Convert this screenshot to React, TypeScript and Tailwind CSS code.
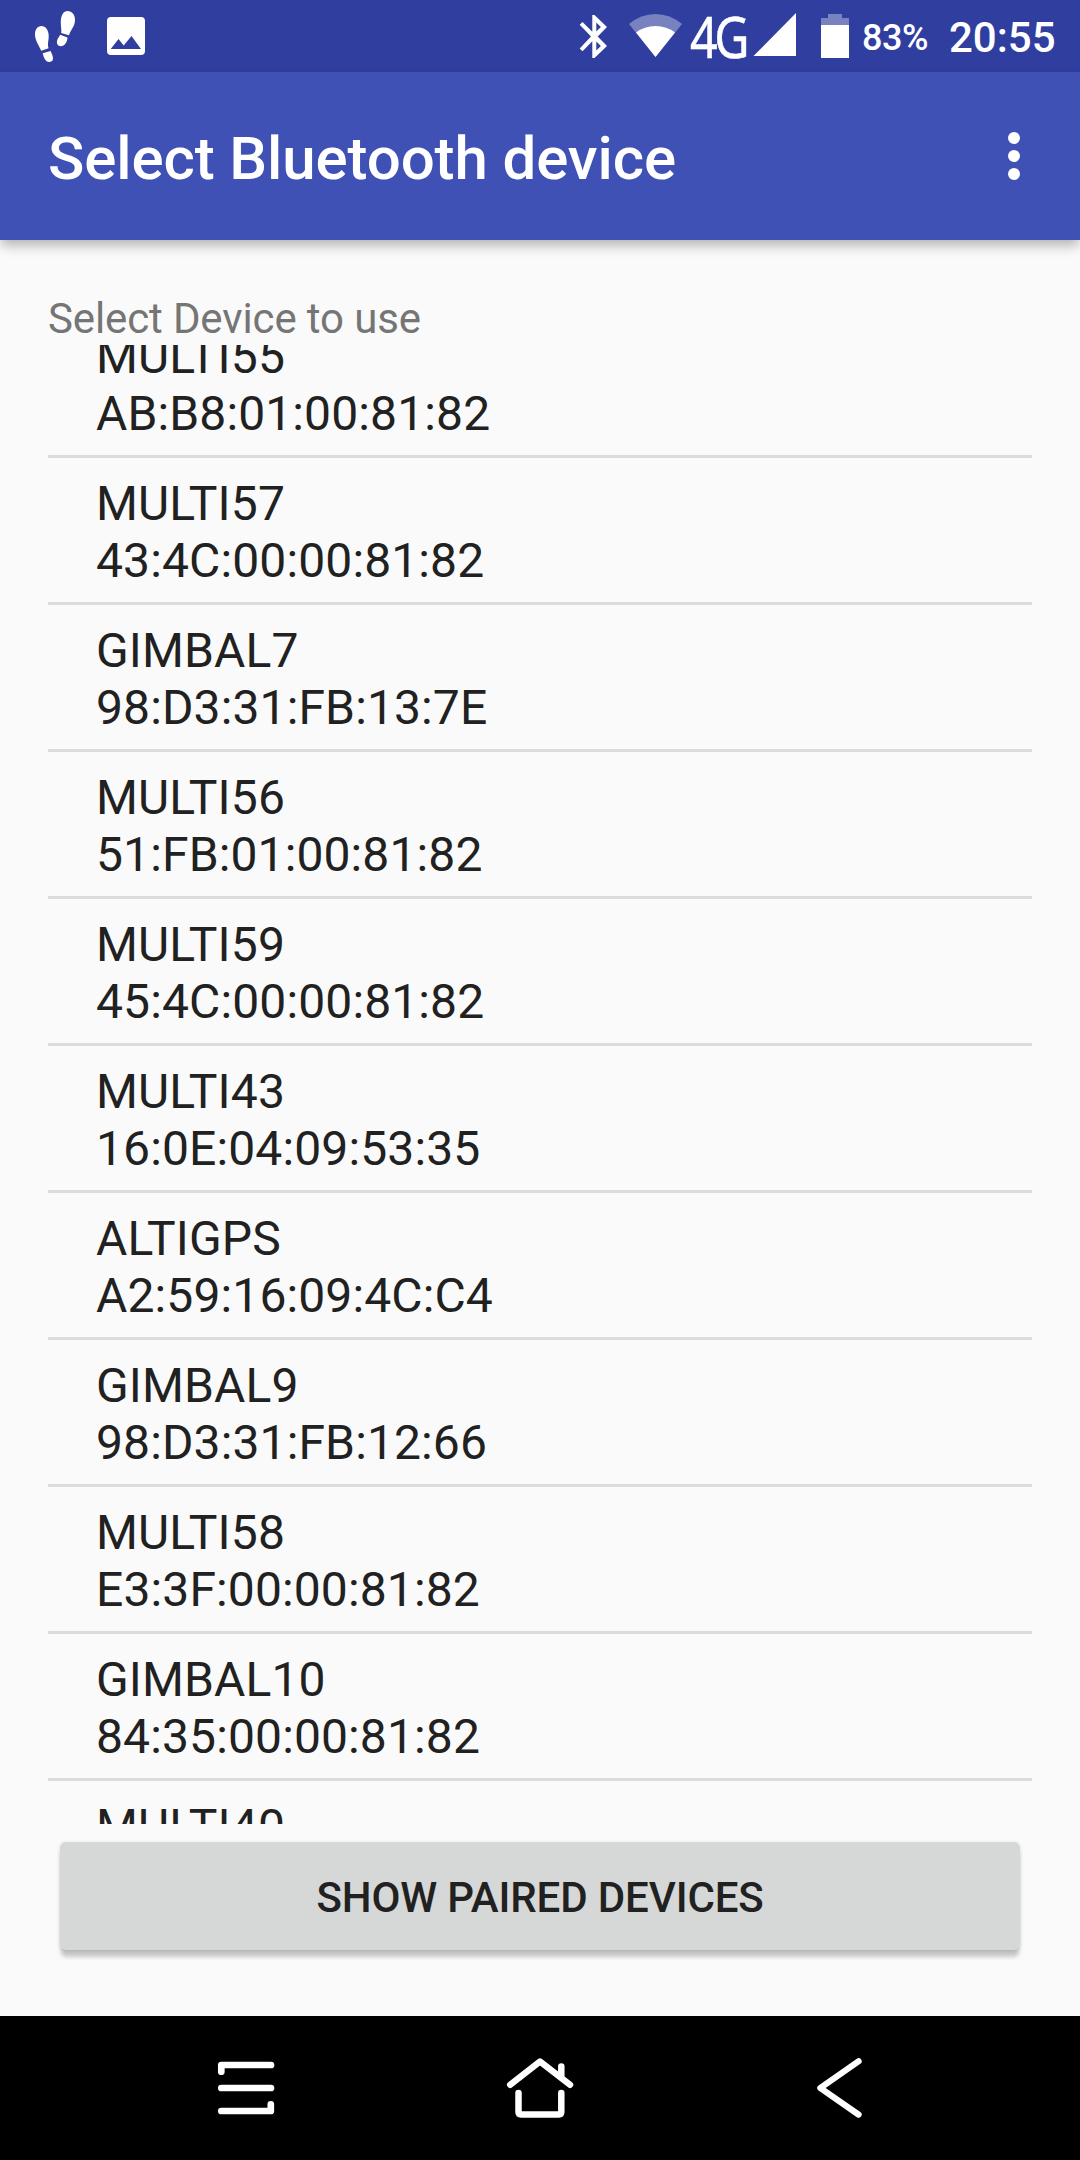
const devices = [
  ["MULTI55", "AB:B8:01:00:81:82"],
  ["MULTI57", "43:4C:00:00:81:82"],
  ["GIMBAL7", "98:D3:31:FB:13:7E"],
  ["MULTI56", "51:FB:01:00:81:82"],
  ["MULTI59", "45:4C:00:00:81:82"],
  ["MULTI43", "16:0E:04:09:53:35"],
  ["ALTIGPS", "A2:59:16:09:4C:C4"],
  ["GIMBAL9", "98:D3:31:FB:12:66"],
  ["MULTI58", "E3:3F:00:00:81:82"],
  ["GIMBAL10", "84:35:00:00:81:82"],
  ["MULTI40", ""],
];

function StatusBar() {
  return (
    <div className="flex h-[72px] shrink-0 items-start bg-[#303f9f] text-white">
      <svg className="ml-[33px] h-[72px] w-[44px]" viewBox="33 0 44 72" fill="currentColor">
        <path d="M41.5 26C45.500 26 48.700 30 48.700 36C48.700 41 47.200 44 48.600 48.200L41.200 50.800C39.500 46 35 41 35 34.500C35 29.500 37.500 26 41.500 26Z" />
        <path d="M42.700 53.300L50.600 50.900C52 54 53.100 56.500 53 59C52.900 61 51 62 49 62C45.500 62 43.600 57.500 42.700 53.300Z" />
        <path d="M67.500 11C72 11 75 14.500 75 20C75 26.500 70.500 30 69 35.200L61.200 33C61.800 29 60.500 26 60.800 21C61.200 15 63.500 11 67.500 11Z" />
        <path d="M60.200 34.800L67.500 37.500C67.300 42 64.500 46.500 60.500 46.300C58 46.200 56.600 44 56.900 41.500C57.200 39 58.900 37 60.200 34.800Z" />
      </svg>
      <svg className="ml-[30px] h-[72px] w-[38px]" viewBox="107 0 38 72" fill="currentColor">
        <path fillRule="evenodd" d="M111 17H141a4 4 0 0 1 4 4V51a4 4 0 0 1-4 4H111a4 4 0 0 1-4-4V21a4 4 0 0 1 4-4ZM110.700 49H141L131.500 36L123.700 45.500L118.500 39Z" />
      </svg>
      <svg className="ml-[433px] h-[72px] w-[32px]" viewBox="578 0 32 72" fill="currentColor">
        <path
          fillRule="evenodd"
          d="M592.300 15H594.500L607 27L597.700 36.500L607 46L594.500 58H592.300V41.300L582.500 51.200L579.700 48.400L591 36.500L579.700 24.800L582.500 22L592.300 31.700ZM596.300 22.500V31.500L600.900 27ZM596.300 41.500V50.500L600.900 46Z"
        />
      </svg>
      <svg className="ml-[17px] h-[72px] w-[58px]" viewBox="627 0 58 72" fill="currentColor">
        <path fillOpacity=".35" d="M655.500 57L629 24Q641 14 655.500 14T682 24Z" />
        <path d="M655.500 57L636 32.500Q644.500 26 655.500 26T675 32.500Z" />
      </svg>
      <span className="ml-[5px] mt-[2px] block w-[59px] origin-left scale-x-[0.850] whitespace-nowrap font-['Noto_Sans',sans-serif] text-[57px] leading-[68px] tracking-[-4px] [-webkit-text-stroke:0.500px_white]">4G</span>
      <svg className="ml-[3px] h-[72px] w-[46px]" viewBox="752 0 46 72" fill="currentColor">
        <path d="M753.500 56L796 13V56Z" />
      </svg>
      <svg className="ml-[23px] h-[72px] w-[28px]" viewBox="821 0 28 72" fill="currentColor">
        <path fillOpacity=".35" d="M828 14H842V18H849V25H821V18H828Z" />
        <path d="M821 25H849V58H821Z" />
      </svg>
      <span className="ml-[13px] mt-[2px] w-[66px] whitespace-nowrap text-[36px] font-medium leading-[72px] tracking-[-0.400px]">83%</span>
      <span className="ml-[21px] mt-[2px] whitespace-nowrap text-[42px] font-medium leading-[72px]">20:55</span>
    </div>
  );
}

function NavBar() {
  const icon = "h-[72px] w-[72px] shrink-0";
  return (
    <nav className="flex h-36 shrink-0 items-center bg-black pl-[210px] text-white">
      <svg className={icon} viewBox="0 0 72 72" fill="none" stroke="currentColor" strokeWidth="6.700" strokeLinecap="round" strokeLinejoin="round">
        <path d="M11.300 19.700V13H61M11.300 36H61M11.300 59H60.800V52.300" />
      </svg>
      <svg className={`${icon} ml-[222px]`} viewBox="0 0 72 72" fill="none" stroke="currentColor" strokeWidth="6.500" strokeLinecap="round" strokeLinejoin="round">
        <path d="M6.200 32.700L36 9.500L66 32.700M57.300 14.500V25M14.500 41V60Q14.500 62.400 17 62.400H55Q57.300 62.400 57.300 60V41" />
      </svg>
      <svg className={`${icon} ml-[228px]`} viewBox="0 0 72 72" fill="none" stroke="currentColor" strokeWidth="6.200" strokeLinecap="round" strokeLinejoin="round">
        <path d="M54.600 9.300L16.300 36L54.600 62.600" />
      </svg>
    </nav>
  );
}

export default function App() {
  return (
    <div className="flex h-[2160px] w-[1080px] flex-col overflow-hidden bg-[#fafafa] font-['Roboto',sans-serif] text-[#212121]">
      <StatusBar />
      <header className="flex h-[168px] shrink-0 items-center justify-between bg-[#3f51b5] pl-12 pr-[60px] text-white shadow-[0_6px_12px_-1px_rgba(0,0,0,0.300)]">
        <h1 className="pt-[5px] text-[60px] font-medium leading-[70px] tracking-[-0.110px]">Select Bluetooth device</h1>
        <div className="flex flex-col gap-[6px]">
          <i className="size-3 rounded-full bg-white" />
          <i className="size-3 rounded-full bg-white" />
          <i className="size-3 rounded-full bg-white" />
        </div>
      </header>
      <main className="flex h-[1776px] flex-col px-12 pt-12">
        <p className="h-[57px] shrink-0 pt-[2px] text-[42px] leading-[57px] tracking-[-0.130px] text-[#757575]">Select Device to use</p>
        <ul className="flex h-[1479px] shrink-0 flex-col overflow-hidden">
          {devices.map(([name, address], i) => (
            <li
              key={name}
              className={`${i === 0 ? "-mt-[34px]" : ""} h-[147px] shrink-0 border-b-[3px] border-[#dcdcdc] pl-12 pt-[17px] text-[48px] leading-[57px] tracking-[0.130px]`}
            >
              <div>{name}</div>
              <div>{address}</div>
            </li>
          ))}
        </ul>
        <button className="mx-3 mt-[18px] h-[108px] shrink-0 rounded-[6px] bg-[#d6d7d7] pt-[2px] text-[42px] font-medium tracking-[-0.140px] shadow-[0_8px_4px_-1px_rgba(0,0,0,0.200),0_1px_4px_rgba(0,0,0,0.120)]">
          SHOW PAIRED DEVICES
        </button>
      </main>
      <NavBar />
    </div>
  );
}
